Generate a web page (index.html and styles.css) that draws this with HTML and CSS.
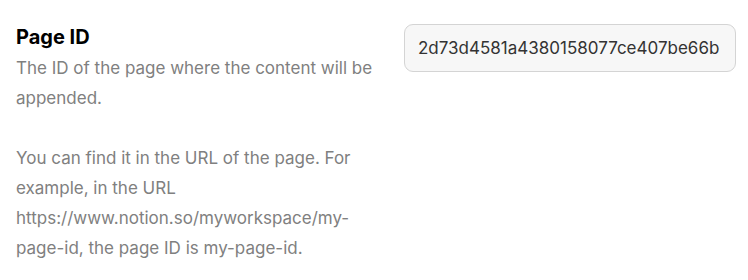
FILE: index.html
```html
<!DOCTYPE html>
<html lang="en">

<head>
    <title>Page ID</title>
    <link rel="stylesheet" href="styles.css">
</head>

<body>
    <div class="field">
        <div class="field-info">
            <h3>Page ID</h3>
            <p>The ID of the page where the content will be appended.</p>
            <p>You can find it in the URL of the page. For example, in the URL https://www.notion.so/myworkspace/my-page-id, the page ID is my-page-id.</p>
        </div>
        <div class="field-input">
            <input type="text" id="pageId" value="2d73d4581a4380158077ce407be66b">
        </div>
    </div>
</body>

</html>
```

FILE: styles.css
```css
body {
    font-family: Inter, "Open Sans", sans-serif;
    background-color: #fff;
    margin: 0;
    padding: 0;
}

.field {
    display: grid;
    grid-template-columns: 372px 332px;
    column-gap: 16px;
    padding: 24px 12px 0 16px;
}

.field-info h3 {
    margin: 0 0 2px 0;
    font-size: 20px;
    line-height: 27px;
    font-weight: 700;
    color: #000;
}

.field-info p {
    margin: 0 0 30px 0;
    font-size: 17px;
    line-height: 30px;
    color: #808080;
}

.field-input input {
    width: 100%;
    height: 48px;
    padding: 0 13px;
    font-family: inherit;
    font-size: 17px;
    color: #333;
    background-color: #f7f7f7;
    border: 1px solid #d4d4d4;
    border-radius: 9px;
    box-sizing: border-box;
}
```
